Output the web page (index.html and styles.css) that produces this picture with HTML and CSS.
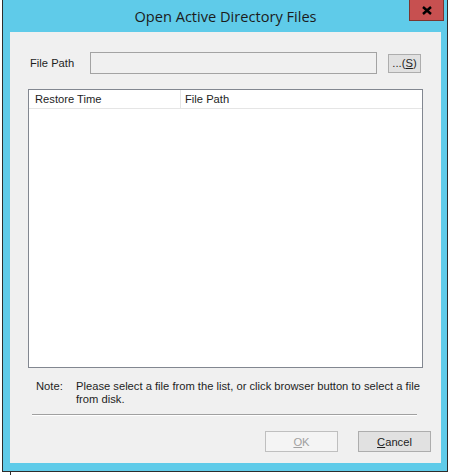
FILE: index.html
```html
<!DOCTYPE html>
<html>
<head>
    <meta name="viewport" content="width=device-width, initial-scale=1.0">
    <title>Open Active Directory Files</title>
    <link rel="stylesheet" href="styles.css">
</head>
<body>
    <div class="back-edge"></div>
    <div class="window">
        <div class="titlebar">Open Active Directory Files</div>
        <div class="close-btn">
            <svg width="10" height="9" viewBox="0 0 10 9">
                <path d="M1 1 L9 8 M9 1 L1 8" stroke="#000" stroke-width="2.4" fill="none"/>
            </svg>
        </div>
        <div class="client">
            <div class="path-row">
                <span class="label">File Path</span>
                <div class="textbox"></div>
                <div class="btn browse">...(<u>S</u>)</div>
            </div>
            <div class="listview">
                <div class="list-header">
                    <div class="col col-time">Restore Time</div>
                    <div class="col col-path">File Path</div>
                </div>
            </div>
            <div class="note">
                <span class="note-label">Note:</span>
                <span class="note-text">Please select a file from the list, or click browser button to select a file from disk.</span>
            </div>
            <div class="separator"></div>
            <div class="actions">
                <div class="btn disabled"><u>O</u>K</div>
                <div class="btn"><u>C</u>ancel</div>
            </div>
        </div>
    </div>
</body>
</html>
```

FILE: styles.css
```css
body {
    margin: 0;
    background-color: #ffffff;
    font-family: "Liberation Sans", Arial, sans-serif;
    font-size: 11.2px;
    color: #1e1e1e;
    position: relative;
    width: 452px;
    height: 475px;
    overflow: hidden;
}
.back-edge {
    position: absolute;
    left: 10px;
    top: 0;
    width: 1px;
    height: 475px;
    background-color: #333333;
}
.window {
    position: relative;
    margin-left: 2px;
    border: 1px solid #2d2d2d;
    border-top: none;
    background-color: #5fcbe9;
    padding: 0 6px 8px 7px;
    box-sizing: border-box;
    width: 446px;
}
.titlebar {
    height: 32px;
    line-height: 32px;
    text-align: center;
    font-family: "Open Sans", "Noto Sans", sans-serif;
    font-size: 14.6px;
    color: #1c1c1c;
}
.close-btn {
    position: absolute;
    top: 0;
    right: 3px;
    width: 33px;
    height: 20px;
    background-color: #c75050;
    border: 1px solid #7a3630;
    border-top: none;
    display: flex;
    align-items: center;
    justify-content: center;
}
.client {
    background-color: #f0f0f0;
    height: 431px;
    padding: 20px 10px 0 18px;
    box-sizing: border-box;
    display: flex;
    flex-direction: column;
}
.path-row {
    display: flex;
    align-items: center;
    height: 22px;
}
.label {
    width: 60px;
    padding-left: 2px;
}
.textbox {
    width: 285px;
    height: 20px;
    border: 1px solid #a3a3a3;
    background-color: #f0f0f0;
}
.btn {
    display: flex;
    align-items: center;
    justify-content: center;
    border: 1px solid #adadad;
    background-color: #e1e1e1;
    box-sizing: border-box;
    color: #1e1e1e;
}
.browse {
    width: 33px;
    height: 19px;
    margin-left: 11px;
}
.listview {
    margin-top: 15px;
    width: 395px;
    height: 279px;
    border: 1px solid #828790;
    box-sizing: border-box;
    background-color: #ffffff;
}
.list-header {
    display: flex;
    height: 18px;
    border-bottom: 1px solid #e5e5e5;
}
.col {
    line-height: 18px;
    padding-left: 6px;
}
.col-time {
    width: 145px;
    border-right: 1px solid #e5e5e5;
}
.col-path {
    padding-left: 4px;
}
.note {
    display: flex;
    margin-top: 12px;
    padding-left: 8px;
    line-height: 13px;
}
.note-label {
    width: 40px;
    flex-shrink: 0;
}
.note-text {
    width: 352px;
}
.separator {
    margin: 8px 0 0 4px;
    width: 385px;
    height: 1px;
    background-color: #a0a0a0;
    border-bottom: 1px solid #ffffff;
}
.actions {
    display: flex;
    justify-content: flex-end;
    gap: 20px;
    margin-top: 15px;
}
.actions .btn {
    width: 73px;
    height: 21px;
}
.actions .disabled {
    border-color: #bfbfbf;
    background-color: #f4f4f4;
    color: #a0a0a0;
}
```
